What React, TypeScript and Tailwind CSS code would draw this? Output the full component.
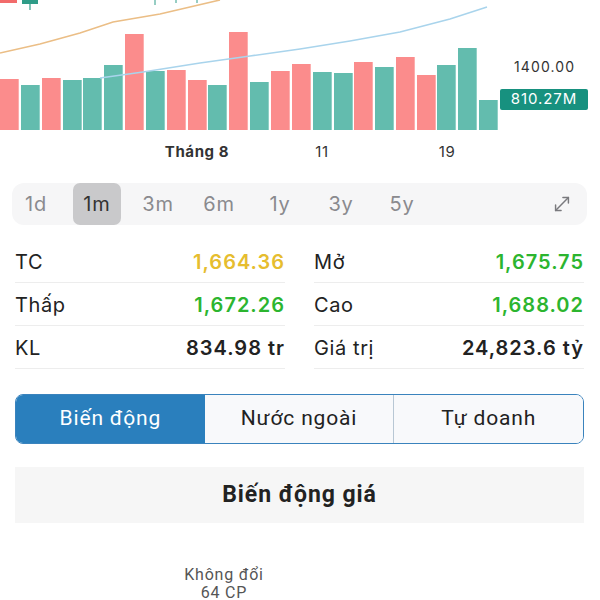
import React from 'react';
import { MoveDiagonal } from 'lucide-react';

const RED = '#fb8c8c';
const TEAL = '#63bcae';

// [left x, top y, up?]
const bars: [number, number, boolean][] = [
  [0, 79, false], [21, 85, true], [42, 78, false], [63, 80, true], [83, 78, true],
  [104, 65, true], [125, 34, false], [146, 71, true], [167, 70, false], [188, 80, false],
  [208, 85, true], [229, 32, false], [250, 82, true], [271, 71, false], [292, 64, false],
  [313, 72, true], [334, 73, true], [354, 62, false], [375, 67, true], [396, 57, false],
  [417, 75, false], [437, 65, true], [458, 48, true], [479, 100, true],
];

const ranges = ['1d', '1m', '3m', '6m', '1y', '3y', '5y'];

const stats = [
  [
    { label: 'TC', value: '1,664.36', color: 'text-[#e6bd2f]' },
    { label: 'Thấp', value: '1,672.26', color: 'text-[#2cb52f]' },
    { label: 'KL', value: '834.98 tr', color: 'text-[#222]' },
  ],
  [
    { label: 'Mở', value: '1,675.75', color: 'text-[#2cb52f]' },
    { label: 'Cao', value: '1,688.02', color: 'text-[#2cb52f]' },
    { label: 'Giá trị', value: '24,823.6 tỷ', color: 'text-[#222]' },
  ],
];

function VolumeChart() {
  return (
    <svg width={500} height={172} viewBox="0 0 500 172" className="block shrink-0">
      {/* candles peeking at the top */}
      <rect x={0} y={-2} width={17} height={5} fill="#f26b6b" />
      <line x1={30} y1={0} x2={30} y2={10} stroke="#2f9c88" strokeWidth={1.2} />
      <rect x={22} y={-2} width={16} height={6} fill="#2f9c88" />
      <line x1={155} y1={0} x2={155} y2={5} stroke="#2f9c88" strokeWidth={1} />
      <line x1={176} y1={0} x2={176} y2={3} stroke="#2f9c88" strokeWidth={1} />
      <line x1={197} y1={0} x2={197} y2={3} stroke="#2f9c88" strokeWidth={1} />

      {bars.map(([x, top, up], i) => (
        <rect key={i} x={x} y={top} width={18.7} height={130 - top} fill={up ? TEAL : RED} />
      ))}

      <polyline
        points="0,53 40,44 80,33 113,22 160,14 220,0"
        fill="none"
        stroke="#ebbe86"
        strokeWidth={1.6}
      />
      <polyline
        points="100,78 143,72 200,63 250,56 300,49 350,41 400,32 450,19 487,7"
        fill="none"
        stroke="#a9d4ec"
        strokeWidth={1.6}
      />

      <g fontFamily="Inter, sans-serif" fontSize={15} fill="#333" letterSpacing="0.6">
        <text x={197} y={157} textAnchor="middle" fontWeight={700}>
          Tháng 8
        </text>
        <text x={322} y={157} textAnchor="middle">
          11
        </text>
        <text x={447} y={157} textAnchor="middle">
          19
        </text>
      </g>
    </svg>
  );
}

export default function App() {
  return (
    <div className="w-[600px] h-[600px] overflow-hidden bg-white font-['Inter',sans-serif]">
      {/* Chart */}
      <div className="flex">
        <VolumeChart />
        <div className="flex flex-col">
          <div className="mt-[58px] pl-[14px] text-[14px] leading-[18px] tracking-[0.08em] text-[#333]">1400.00</div>
          <div className="mt-[13px] flex h-[21px] w-[88px] items-center justify-center rounded-[2px] bg-[#17917f] text-[15px] tracking-[0.06em] text-white">
            810.27M
          </div>
        </div>
      </div>

      {/* Range picker */}
      <div className="ml-[12px] mt-[11px] flex h-[42px] w-[575px] items-stretch gap-[13px] rounded-[12px] bg-[#f6f6f7]">
        {ranges.map((r) => (
          <div
            key={r}
            className={`flex w-[48px] items-center justify-center rounded-[7px] text-[20px] tracking-[0.04em] ${
              r === '1m' ? 'bg-[#c9c9cb] text-[#333]' : 'text-[#8a8a8e]'
            }`}
          >
            {r}
          </div>
        ))}
        <div className="ml-auto mr-[14px] flex items-center">
          <MoveDiagonal className="h-[22px] w-[22px] text-[#7a7a7e]" strokeWidth={1.6} />
        </div>
      </div>

      {/* Stats */}
      <div className="ml-[15px] mt-[15px] grid w-[569px] grid-cols-2 gap-x-[29px]">
        {stats.map((col, ci) => (
          <div key={ci} className="flex flex-col">
            {col.map((s) => (
              <div key={s.label} className="flex h-[43px] items-center justify-between border-b border-[#ededed] pt-[2px]">
                <span className="text-[20px] tracking-[0.03em] text-[#222]">{s.label}</span>
                <span className={`text-[20px] font-semibold tracking-[0.05em] ${s.color}`}>{s.value}</span>
              </div>
            ))}
          </div>
        ))}
      </div>

      {/* Segmented control */}
      <div className="ml-[15px] mt-[25px] flex h-[50px] w-[569px] overflow-hidden rounded-[8px] border-[1.5px] border-[#3a83bd] font-['Roboto',sans-serif] text-[21px] tracking-[0.04em]">
        <div className="flex flex-1 items-center justify-center bg-[#2a7fbd] text-white">Biến động</div>
        <div className="flex flex-1 items-center justify-center border-r-[1.5px] border-[#b8c7d4] bg-[#f8f9fb] text-[#222]">
          Nước ngoài
        </div>
        <div className="flex flex-1 items-center justify-center bg-[#f8f9fb] text-[#222]">Tự doanh</div>
      </div>

      {/* Section title */}
      <div className="ml-[15px] mt-[23px] flex h-[56px] w-[569px] items-center justify-center bg-[#f6f6f6] font-['Roboto',sans-serif] text-[23px] font-bold tracking-[0.04em] text-[#222]">
        Biến động giá
      </div>

      {/* Donut legend label */}
      <div className="ml-[164px] mt-[43px] w-[120px] text-center font-['Roboto',sans-serif] text-[16px] leading-[18px] tracking-[0.05em] text-[#555]">
        <div>Không đổi</div>
        <div>64 CP</div>
      </div>
    </div>
  );
}
